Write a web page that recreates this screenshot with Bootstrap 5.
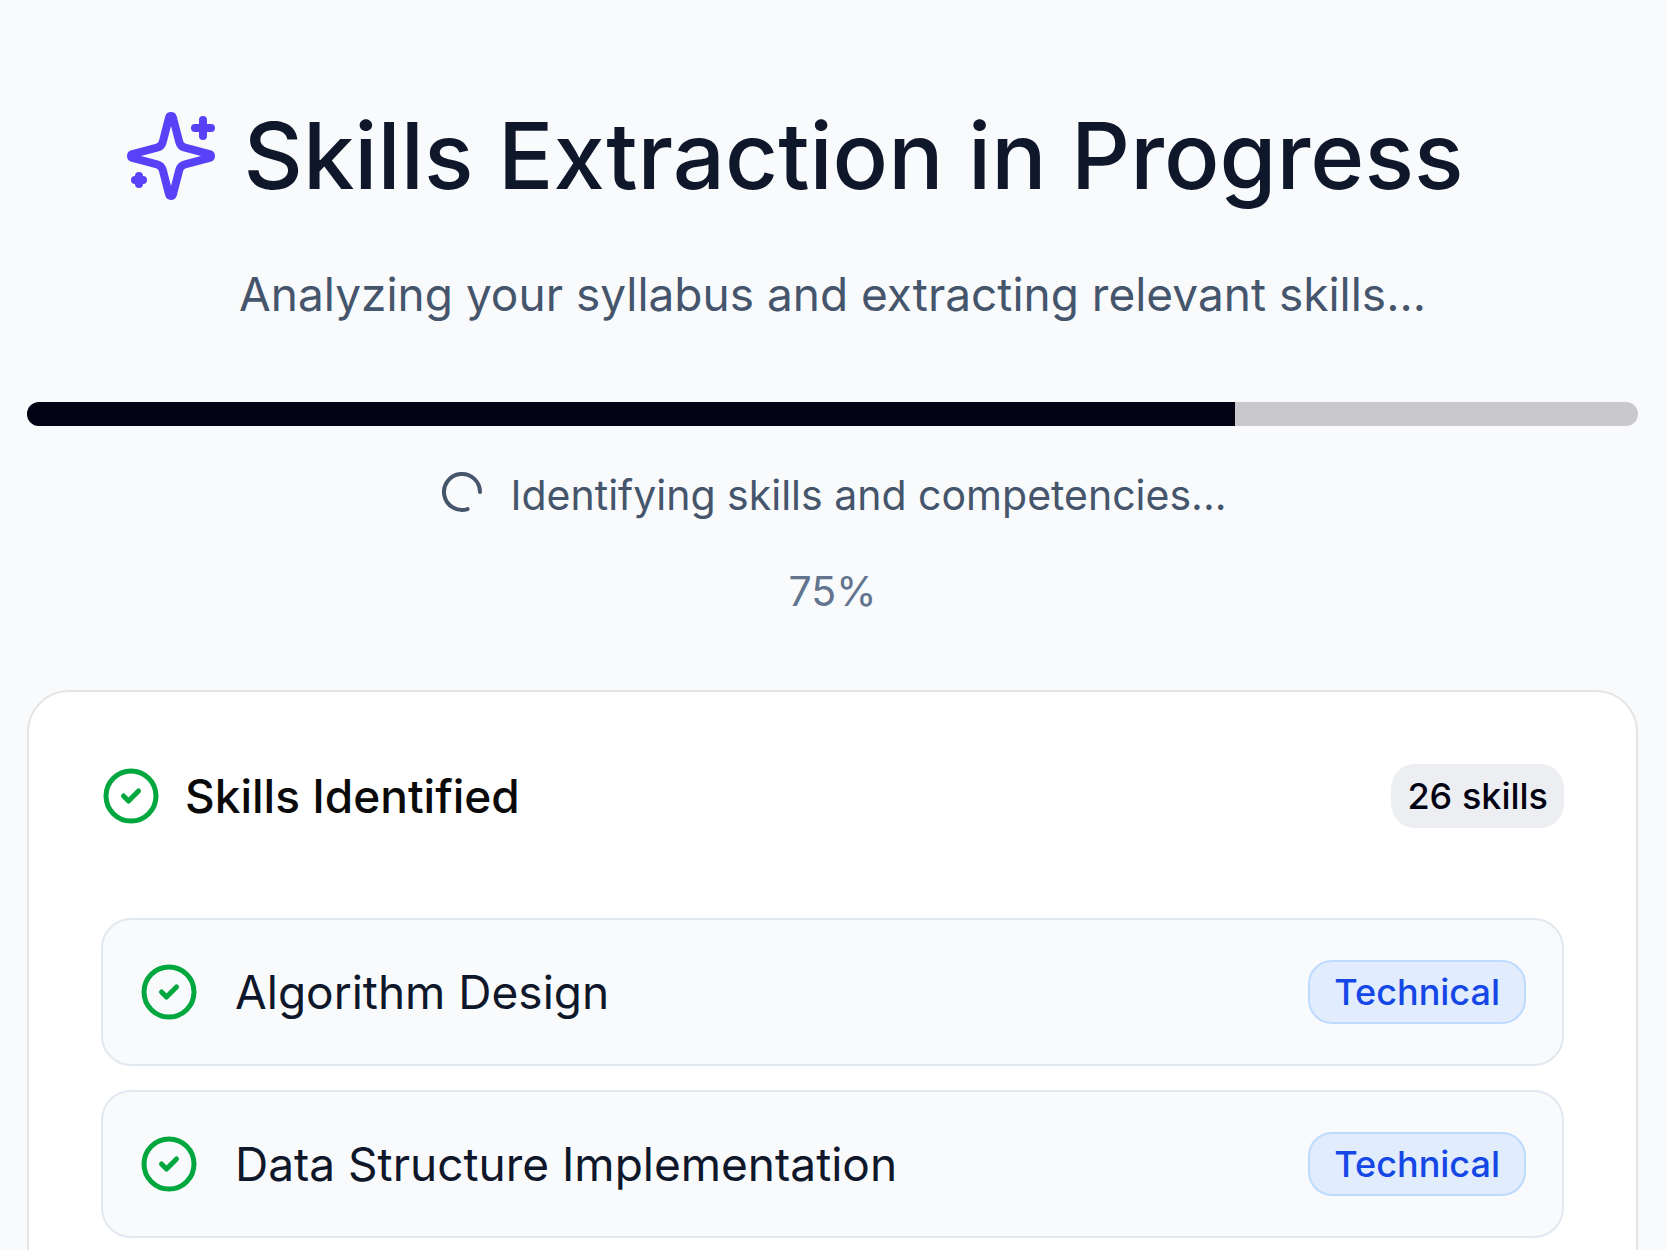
<!DOCTYPE html>
<html lang="en">
<head>
<meta charset="utf-8">
<meta name="viewport" content="width=device-width, initial-scale=1">
<title>Skills Extraction</title>
<link href="https://cdn.jsdelivr.net/npm/bootstrap@5.3.0/dist/css/bootstrap.min.css" rel="stylesheet">
<style>
  body { background: #f9fafc; font-family: Inter, "Liberation Sans", sans-serif; font-size: 46px; line-height: 72px; color: #0f172b; }
  svg { fill: none; stroke: currentColor; stroke-width: 2; stroke-linecap: round; stroke-linejoin: round; flex: none; }
  .page-shell { padding: 96px 29px 0 27px; }
  .hero-title { font-size: 92px; line-height: 120px; font-weight: 500; gap: 24px; padding-right: 78px; }
  .hero-title svg { width: 96px; height: 96px; color: #5842f8; }
  .hero-sub { margin-top: 42px; color: #45556c; }
  .extract-progress { --bs-progress-height: 24px; --bs-progress-bg: #c9c8cd; --bs-progress-bar-bg: #030213; --bs-progress-border-radius: 12px; margin-top: 72px; }
  .status-line { font-size: 41px; line-height: 60px; color: #45556c; gap: 24px; margin-top: 39px; }
  .status-line svg { width: 48px; height: 48px; margin-bottom: 6px; }
  .percent-line { font-size: 41px; line-height: 60px; color: #62748e; margin-top: 36px; }
  .skills-card { --bs-card-border-width: 2px; --bs-card-border-color: #e5e5e5; --bs-card-border-radius: 42px; --bs-card-inner-border-radius: 40px; --bs-card-spacer-x: 72px; --bs-card-spacer-y: 72px; margin-top: 69px; }
  .skills-title { font-size: 46px; line-height: 64px; font-weight: 500; color: #0a0a0a; gap: 24px; }
  .ok-icon { width: 60px; height: 60px; color: #00a63e; }
  .skill-badge { --bs-badge-font-size: 36px; --bs-badge-font-weight: 500; --bs-badge-padding-x: 16px; --bs-badge-padding-y: 8px; --bs-badge-border-radius: 24px; line-height: 48px; }
  .count-badge { background: #eceef2; color: #030213; }
  .type-badge { --bs-badge-padding-x: 24px; --bs-badge-padding-y: 6px; background: #e1edfc; color: #1447e6; border: 2px solid #bedbff; }
  .skills-list { gap: 24px; margin-top: 90px; }
  .skill-row { background: #f9fafc; border: 2px solid #e2e8f0; border-radius: 30px; padding: 36px; gap: 36px; }
</style>
</head>
<body>
<svg class="d-none" aria-hidden="true">
  <symbol id="circle-check" viewBox="0 0 24 24"><circle cx="12" cy="12" r="10"/><path d="m9 12 2 2 4-4"/></symbol>
</svg>
<main class="page-shell">
  <header class="text-center">
    <h1 class="hero-title d-flex justify-content-center align-items-center mb-0">
      <svg viewBox="0 0 24 24" aria-hidden="true"><path d="M9.937 15.5A2 2 0 0 0 8.5 14.063l-6.135-1.582a.5.5 0 0 1 0-.962L8.5 9.936A2 2 0 0 0 9.937 8.5l1.582-6.135a.5.5 0 0 1 .963 0L14.063 8.5A2 2 0 0 0 15.5 9.937l6.135 1.581a.5.5 0 0 1 0 .964L15.5 14.063a2 2 0 0 0-1.437 1.437l-1.582 6.135a.5.5 0 0 1-.963 0z"/><path d="M20 3v4M22 5h-4M4 17v2M5 18H3"/></svg>
      <span>Skills Extraction in Progress</span>
    </h1>
    <p class="hero-sub mb-0">Analyzing your syllabus and extracting relevant skills...</p>
  </header>
  <div class="progress extract-progress" role="progressbar" aria-label="Extraction progress" aria-valuenow="75" aria-valuemin="0" aria-valuemax="100">
    <div class="progress-bar" style="width: 75%"></div>
  </div>
  <p class="status-line d-flex justify-content-center align-items-center mb-0">
    <svg viewBox="0 0 24 24" aria-hidden="true"><path d="M21 12a9 9 0 1 0-6.219 8.56"/></svg>
    <span>Identifying skills and competencies...</span>
  </p>
  <p class="percent-line text-center mb-0">75%</p>
  <section class="card skills-card">
    <div class="card-body">
      <div class="d-flex justify-content-between align-items-center">
        <h2 class="skills-title d-flex align-items-center mb-0">
          <svg class="ok-icon" aria-hidden="true"><use href="#circle-check"/></svg>
          <span>Skills Identified</span>
        </h2>
        <span class="badge skill-badge count-badge">26 skills</span>
      </div>
      <ul class="skills-list list-unstyled d-flex flex-column mb-0">
        <li class="skill-row d-flex align-items-center">
          <svg class="ok-icon" aria-hidden="true"><use href="#circle-check"/></svg>
          <span class="flex-grow-1">Algorithm Design</span>
          <span class="badge skill-badge type-badge">Technical</span>
        </li>
        <li class="skill-row d-flex align-items-center">
          <svg class="ok-icon" aria-hidden="true"><use href="#circle-check"/></svg>
          <span class="flex-grow-1">Data Structure Implementation</span>
          <span class="badge skill-badge type-badge">Technical</span>
        </li>
      </ul>
    </div>
  </section>
</main>
<script src="https://cdn.jsdelivr.net/npm/bootstrap@5.3.0/dist/js/bootstrap.bundle.min.js"></script>
</body>
</html>
